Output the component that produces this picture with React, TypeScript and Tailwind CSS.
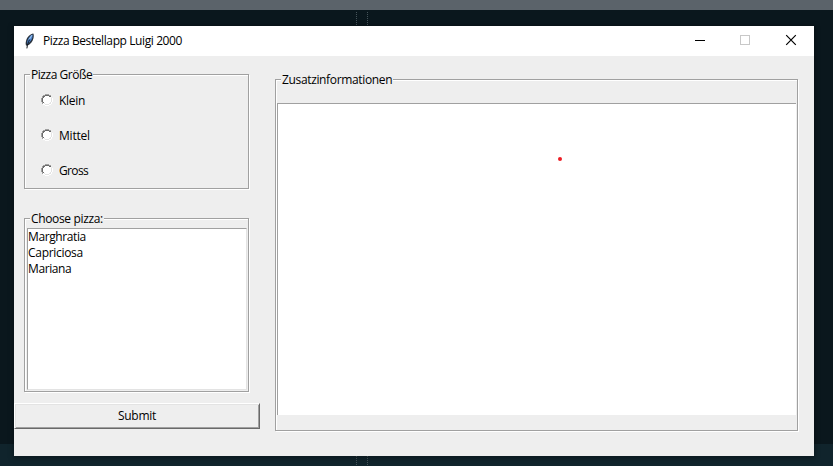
import type { ReactNode } from "react";

const groove = "border border-[#a0a0a0] shadow-[1px_1px_0_#fff,inset_1px_1px_0_#fff]";

function Group({ title, className, tracking, children }: { title: string; className: string; tracking: string; children: ReactNode }) {
  return (
    <section className={`relative ${groove} ${className}`}>
      <h2 className={`absolute -top-2 left-[5px] h-4 bg-[#eeeeee] px-px leading-4 whitespace-nowrap ${tracking}`}>{title}</h2>
      {children}
    </section>
  );
}

function Radio({ label, tracking }: { label: string; tracking: string }) {
  return (
    <label className="flex h-[35px] items-center">
      <svg width="12" height="12" viewBox="0 0 12 12" className="mr-[6px] -mt-[2px]" shapeRendering="crispEdges">
        <path d="M4 1h4v1h2v2h1v4h-1v2H8v1H4v-1H2V8H1V4h1V2h2z" fill="#fff" />
        <path d="M4 0h4v1H4zM2 1h2v1H2zM8 1h2v1H8zM1 2h1v2H1zM0 4h1v4H0zM1 8h1v2H1z" fill="#a0a0a0" />
        <path d="M4 1h4v1H4zM2 2h2v1H2zM8 2h2v1H8zM2 3h1v1H2zM1 4h1v4H1zM2 8h1v1H2z" fill="#696969" />
        <path d="M11 4h1v4h-1zM10 8h1v2h-1zM8 10h2v1H8zM4 11h4v1H4zM2 10h2v1H2z" fill="#fff" />
        <path d="M10 4h1v4h-1zM9 8h1v1H9zM8 9h2v1H8zM4 10h4v1H4zM3 9h1v1H3z" fill="#e3e3e3" />
      </svg>
      <span className={tracking}>{label}</span>
    </label>
  );
}

function Feather() {
  return (
    <svg width="12" height="16" viewBox="0 0 12 16">
      <path d="M9.300.4C6.300.8 3.200 3.800 2.200 7.200c-.6 2-.7 3.600-.2 5.200l1.200.3C6.500 11.500 8.700 8.500 9.400 5.500 9.900 3.500 10 1.600 9.300.4z" fill="#29323d" />
      <path d="M8.600 1.500C6 2.600 4.200 5.300 3.300 8.300l-.3 3C5.500 9.800 7.700 6.800 8.400 4.400z" fill="#4a82cc" />
      <path d="M8 2.200 5 6.600" stroke="#9cc4f2" strokeWidth="1.100" />
      <path d="M5.600 6.500C4.400 9 3.300 11.500 2.900 15.400" stroke="#10151c" strokeWidth="1" fill="none" />
    </svg>
  );
}

function Guides({ className }: { className: string }) {
  return (
    <svg width="12" height="14" viewBox="0 0 12 14" className={className} shapeRendering="crispEdges">
      <path d="M.5 0v14M11.500 0v14" stroke="#46545a" strokeDasharray="1 1" />
    </svg>
  );
}

export default function App() {
  return (
    <div className="relative h-[466px] w-[833px] overflow-hidden bg-[#0a171d] pt-[26px] pl-[14px] font-['Open_Sans',sans-serif] text-[12px] text-black">
      <div className="absolute inset-x-0 top-0 h-[10px] bg-[#5b636a]" />
      <div className="absolute inset-x-0 bottom-0 h-[22px] bg-[#10242c]" />
      <Guides className="absolute top-3 left-[356px]" />
      <Guides className="absolute top-[456px] left-[356px]" />
      <main className="relative flex h-[430px] w-[800px] flex-col bg-[#eeeeee] shadow-[0_1px_5px_1px_rgba(0,0,0,0.35)]">
        <header className="flex h-[30px] shrink-0 items-center bg-white pl-[10px]">
          <Feather />
          <h1 className="ml-[7px] grow tracking-[-0.4px]">Pizza Bestellapp Luigi 2000</h1>
          <svg width="120" height="12" viewBox="0 0 120 12" fill="none" className="mb-[2px]">
            <path d="M1 6.500h10" stroke="#000" shapeRendering="crispEdges" />
            <path d="M46.500 1.500h9v9h-9z" stroke="#c8c8c8" shapeRendering="crispEdges" />
            <path d="m92.200 1.200 9.600 9.600m0-9.600-9.600 9.600" stroke="#000" strokeWidth="1.200" />
          </svg>
        </header>
        <div className="flex grow">
          <div className="flex w-[246px] flex-col pt-[18px]">
            <Group title="Pizza Größe" className="ml-[10px] h-[115px] w-[225px] pt-2 pl-[16px]" tracking="tracking-[-0.45px]">
              <Radio label="Klein" tracking="tracking-[-0.3px]" />
              <Radio label="Mittel" tracking="tracking-[-0.2px]" />
              <Radio label="Gross" tracking="tracking-[-0.65px]" />
            </Group>
            <Group title="Choose pizza:" className="mt-[29px] ml-[10px] h-[174px] w-[225px] pt-[9px] pl-[2px]" tracking="tracking-[-0.35px]">
              <ul className="h-[162px] w-[220px] border border-t-[#a0a0a0] border-r-[#e3e3e3] border-b-[#e3e3e3] border-l-[#a0a0a0] bg-white leading-4">
                <li className="tracking-[-0.4px]">Marghratia</li>
                <li className="tracking-[-0.3px]">Capriciosa</li>
                <li className="tracking-[-0.4px]">Mariana</li>
              </ul>
            </Group>
            <button className="mt-[11px] h-[26px] w-[246px] border border-t-white border-r-[#696969] border-b-[#696969] border-l-white tracking-[-0.25px] shadow-[inset_1px_1px_0_#e3e3e3,inset_-1px_-1px_0_#a0a0a0]">
              Submit
            </button>
          </div>
          <Group title="Zusatzinformationen" className="mt-[23px] ml-[15px] h-[352px] w-[523px] pt-[23px] pl-px" tracking="tracking-[-0.35px]">
            <div className="h-[312px] w-[519px] border-t border-l border-[#a0a0a0] bg-white pt-[53px] pl-[280px]">
              <div className="size-1 rounded-full bg-[#ed1c24]" />
            </div>
          </Group>
        </div>
      </main>
    </div>
  );
}
